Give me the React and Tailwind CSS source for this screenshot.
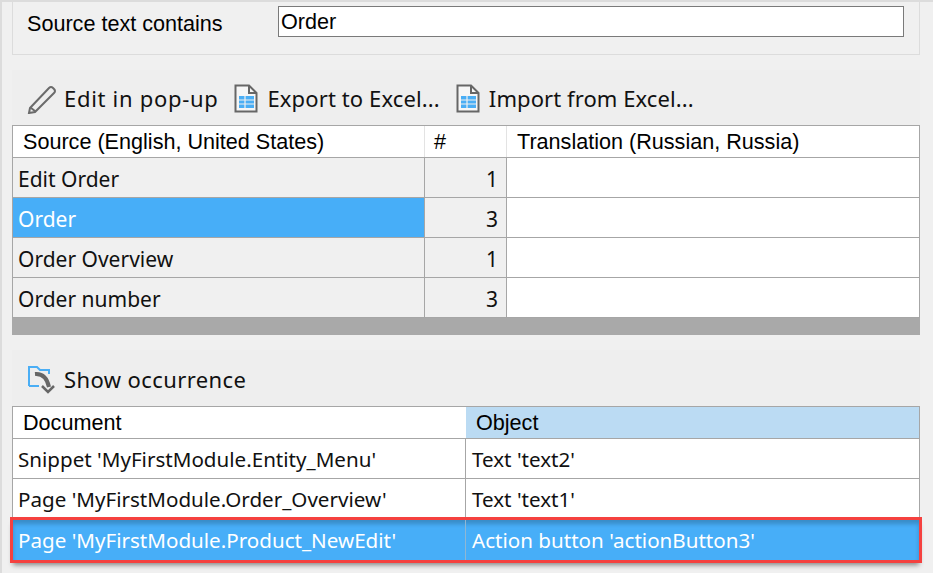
const uiFont = { fontFamily: '"Noto Sans", sans-serif' };

const PencilIcon = () => (
  <svg width="30" height="30" viewBox="0 0 30 30" fill="none" stroke="#6b6b6b" strokeWidth="2">
    <path d="M3 24 L22 4 Q24 2 26 4 L27 5 Q29 7 27 9 L8 28 L2 29 Z" />
    <path d="M3.5 23.5 L8.5 27.5" />
  </svg>
);

const SheetIcon = () => (
  <svg width="24" height="30" viewBox="0 0 24 30" fill="none">
    <path d="M1.5 1.5 H15 L22.5 9 V27.5 H1.5 Z" stroke="#666" strokeWidth="2" fill="#f6f6f6" />
    <path d="M15 1.5 V9 H22.5" stroke="#666" strokeWidth="2" />
    <rect x="5" y="12" width="15" height="12" fill="#4aaef5" />
    <path d="M5 16 H20 M5 20 H20 M11 12 V24" stroke="#f0f0f0" strokeWidth="1.2" />
  </svg>
);

const OccurrenceIcon = () => (
  <svg width="30" height="30" viewBox="0 0 30 30" fill="none">
    <path d="M2 21 V2 H10 L13 5 H22 V9" stroke="#4aaef5" strokeWidth="2" />
    <path d="M2 21 H12" stroke="#4aaef5" strokeWidth="2" />
    <path d="M8 9 Q19 8 22 22" stroke="#666" strokeWidth="4" />
    <path d="M15 21 L21 27 L27 21" stroke="#666" strokeWidth="2.5" />
  </svg>
);

const ToolButton = ({ icon, label, className, tracking }) => (
  <div className={`flex items-center ${className}`}>
    {icon}
    <span className={`text-[22px] leading-none text-[#111] pb-[2px] ${tracking}`} style={uiFont}>{label}</span>
  </div>
);

const HeaderCell = ({ className, children }) => (
  <div className={`flex items-center pt-[2px] text-[21.6px] text-black font-['Liberation_Sans',sans-serif] ${className}`}>
    {children}
  </div>
);

const sources = [
  { text: 'Edit Order', count: 1 },
  { text: 'Order', count: 3, selected: true },
  { text: 'Order Overview', count: 1 },
  { text: 'Order number', count: 3 },
];

const occurrences = [
  { doc: "Snippet 'MyFirstModule.Entity_Menu'", obj: "Text 'text2'" },
  { doc: "Page 'MyFirstModule.Order_Overview'", obj: "Text 'text1'" },
];

export default function App() {
  return (
    <div className="w-[933px] h-[573px] overflow-hidden bg-[#f0f0f0] border-t-2 border-t-[#dcdcdc] border-l-2 border-l-[#dcdcdc] pl-[10px] pr-[13px]">
      <div className="h-[53px] border-x border-b border-[#dcdcdc] bg-[#f0f0f0] flex items-start pt-[4px] pl-[14px] pr-[15px]">
        <span className="w-[251px] pt-[4px] text-[21.6px] leading-[28px] text-black font-['Liberation_Sans',sans-serif]">Source text contains</span>
        <div className="flex-1 h-[31px] border border-[#7a7a7a] bg-white pl-[2px] text-[21.6px] leading-[30px] text-black font-['Liberation_Sans',sans-serif]">Order</div>
      </div>

      <div className="mt-[15px] h-[55px] bg-[#eeeeee] flex items-end pb-[11px] pl-[15px]">
        <ToolButton icon={<PencilIcon />} label="Edit in pop-up" className="gap-[7px]" tracking="tracking-[0.7px]" />
        <ToolButton icon={<SheetIcon />} label="Export to Excel..." className="ml-[16px] gap-[9px]" tracking="tracking-[0.12px]" />
        <ToolButton icon={<SheetIcon />} label="Import from Excel..." className="ml-[16px] gap-[9px]" tracking="tracking-[0.08px]" />
      </div>

      <div className="border-t border-t-[#a6a6a6] border-x border-x-[#a6a6a6]">
        <div className="flex h-[32px] bg-white border-b border-[#a6a6a6]">
          <HeaderCell className="w-[412px] pl-[10px] border-r border-[#e3e3e3]">Source (English, United States)</HeaderCell>
          <HeaderCell className="w-[82px] pl-[9px] border-r border-[#e3e3e3]">#</HeaderCell>
          <HeaderCell className="flex-1 pl-[10px]">Translation (Russian, Russia)</HeaderCell>
        </div>
        {sources.map((row) => (
          <div key={row.text} className="flex h-[40px] border-b border-[#a6a6a6] text-[21px]" style={uiFont}>
            <div className={`w-[412px] flex items-center pl-[5px] pt-[4px] border-r border-[#a6a6a6] ${row.selected ? 'bg-[#47aef8] text-white' : 'bg-[#f0f0f0] text-[#111]'}`}>
              {row.text}
            </div>
            <div className="w-[82px] flex items-center justify-end pr-[8px] pt-[4px] bg-[#f0f0f0] border-r border-[#a6a6a6] text-[#111]">
              {row.count}
            </div>
            <div className="flex-1 bg-white" />
          </div>
        ))}
      </div>
      <div className="h-[17px] bg-[#a9a9a9]" />

      <div className="mt-[15px] h-[56px] bg-[#eeeeee] flex items-end pb-[11px] pl-[15px]">
        <ToolButton icon={<OccurrenceIcon />} label="Show occurrence" className="gap-[7px]" tracking="tracking-[0.4px]" />
      </div>

      <div className="border-t border-t-[#a6a6a6] border-x border-x-[#a6a6a6]">
        <div className="flex h-[32px] border-b border-[#a6a6a6]">
          <HeaderCell className="w-[453px] pl-[10px] bg-white">Document</HeaderCell>
          <HeaderCell className="flex-1 pl-[10px] bg-[#bbdbf3]">Object</HeaderCell>
        </div>
        {occurrences.map((row) => (
          <div key={row.doc} className="flex h-[40px] bg-white border-b border-[#a6a6a6] text-[20.6px] text-[#111]" style={uiFont}>
            <div className="w-[453px] flex items-center pl-[5px] pt-[1px] border-r border-[#a6a6a6]">{row.doc}</div>
            <div className="flex-1 flex items-center pl-[6px] pt-[1px]">{row.obj}</div>
          </div>
        ))}
        <div className="flex h-[40px] mt-[1px] bg-[#47aef8] text-white text-[20.6px] outline-[3px] outline-[#f5413f] shadow-[0_5px_5px_rgba(0,0,0,0.45),inset_0_4px_4px_rgba(0,0,0,0.2)] relative" style={uiFont}>
          <div className="w-[453px] flex items-center pl-[5px] pt-[1px] border-r border-[#8fb7d4]">Page 'MyFirstModule.Product_NewEdit'</div>
          <div className="flex-1 flex items-center pl-[6px] pt-[1px]">Action button 'actionButton3'</div>
        </div>
      </div>
    </div>
  );
}
